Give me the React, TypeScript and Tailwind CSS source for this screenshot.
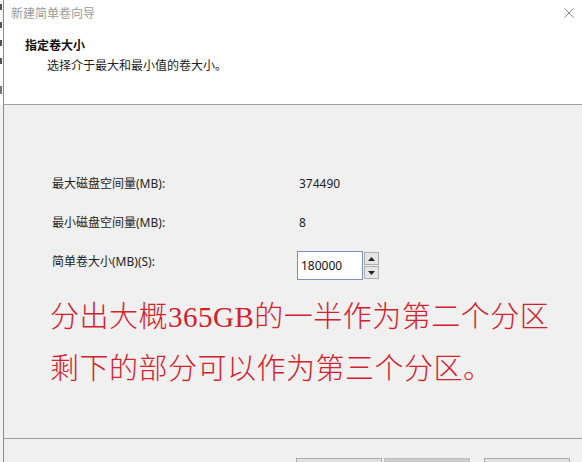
const uiFont = "font-['Noto_Sans','Noto_Sans_CJK_SC',sans-serif]";

function SpinBox({ value }: { value: string }) {
  return (
    <div className="flex h-[29px]">
      <div className="flex h-full w-[66px] items-center border border-[#7a8fb8] bg-white pl-[3px] text-[12px] text-[#111]">
        {value}
      </div>
      <div className="ml-[1px] flex h-full w-[15px] flex-col gap-[1px] py-[1px]">
        <div className="flex flex-1 items-center justify-center border border-[#adadad] bg-[#e5e5e5]">
          <svg width="7" height="4" viewBox="0 0 7 4">
            <path d="M0 4 L3.5 0 L7 4 Z" fill="#222" />
          </svg>
        </div>
        <div className="flex flex-1 items-center justify-center border border-[#adadad] bg-[#e5e5e5]">
          <svg width="7" height="4" viewBox="0 0 7 4">
            <path d="M0 0 L3.5 4 L7 0 Z" fill="#222" />
          </svg>
        </div>
      </div>
    </div>
  );
}

export default function App() {
  return (
    <div className={`flex h-[462px] w-[582px] overflow-hidden bg-white ${uiFont}`}>
      {/* background window peeking at the left edge */}
      <div className="flex w-[4px] shrink-0 flex-col border-r border-[#8c8c8c] bg-[#f2f2f2]">
        <div className="h-[105px] shrink-0 bg-white pt-[4px]">
          <div className="h-[6px] w-[2px] bg-[#555]" />
          <div className="mt-[12px] h-[6px] w-[2px] bg-[#555]" />
          <div className="mt-[12px] h-[6px] w-[2px] bg-[#555]" />
          <div className="mt-[12px] h-[6px] w-[2px] bg-[#555]" />
          <div className="mt-[22px] h-[8px] w-[2px] bg-[#777]" />
        </div>
      </div>

      <div className="flex min-w-0 flex-1 flex-col">
        <header className="relative h-[105px] shrink-0 border-b border-[#a0a0a0] bg-white">
          <p className="pl-[7px] pt-[6px] text-[12px] leading-4 text-[#9a9a9a]">新建简单卷向导</p>
          <svg
            className="absolute right-[8px] top-[8px]"
            width="10"
            height="10"
            viewBox="0 0 10 10"
          >
            <path d="M0.5 0.5 L9.5 9.5 M9.5 0.5 L0.5 9.5" stroke="#8a8a8a" strokeWidth="1" />
          </svg>
          <p className="pl-[21px] pt-[16px] text-[12px] font-bold leading-4 text-[#111]">指定卷大小</p>
          <p className="pl-[43px] pt-[4px] text-[12px] leading-4 text-[#222]">
            选择介于最大和最小值的卷大小。
          </p>
        </header>

        <section className="h-[334px] shrink-0 border-b border-[#a0a0a0] bg-[#f0f0f0]">
          <div className="pl-[48px] text-[12px] text-[#222]">
            <div className="mt-[71px] flex h-4 items-center leading-4">
              <span className="w-[247px]">最大磁盘空间量(MB):</span>
              <span>374490</span>
            </div>
            <div className="mt-[23px] flex h-4 items-center leading-4">
              <span className="w-[247px]">最小磁盘空间量(MB):</span>
              <span>8</span>
            </div>
            <div className="mt-[20px] flex items-start">
              <span className="mt-[3px] w-[245px] leading-4">简单卷大小(MB)(S):</span>
              <SpinBox value="180000" />
            </div>
          </div>
          <div className="mt-[11px] pl-[46px] font-['Liberation_Serif','Noto_Sans_CJK_SC',serif] text-[29px] font-light leading-[52px] tracking-[0.5px] text-[#d3222b]">
            <p>分出大概365GB的一半作为第二个分区</p>
            <p>剩下的部分可以作为第三个分区。</p>
          </div>
        </section>

        <footer className="flex min-h-0 flex-1 items-start gap-[2px] overflow-hidden bg-[#f0f0f0] pl-[292px] pt-[19px]">
          <div className="h-[24px] w-[86px] shrink-0 border border-[#adadad] bg-[#e1e1e1]" />
          <div className="h-[24px] w-[86px] shrink-0 border border-[#bfbfbf] bg-[#cccccc]" />
          <div className="ml-[12px] h-[24px] w-[86px] shrink-0 border border-[#adadad] bg-[#e1e1e1]" />
        </footer>
      </div>
    </div>
  );
}
